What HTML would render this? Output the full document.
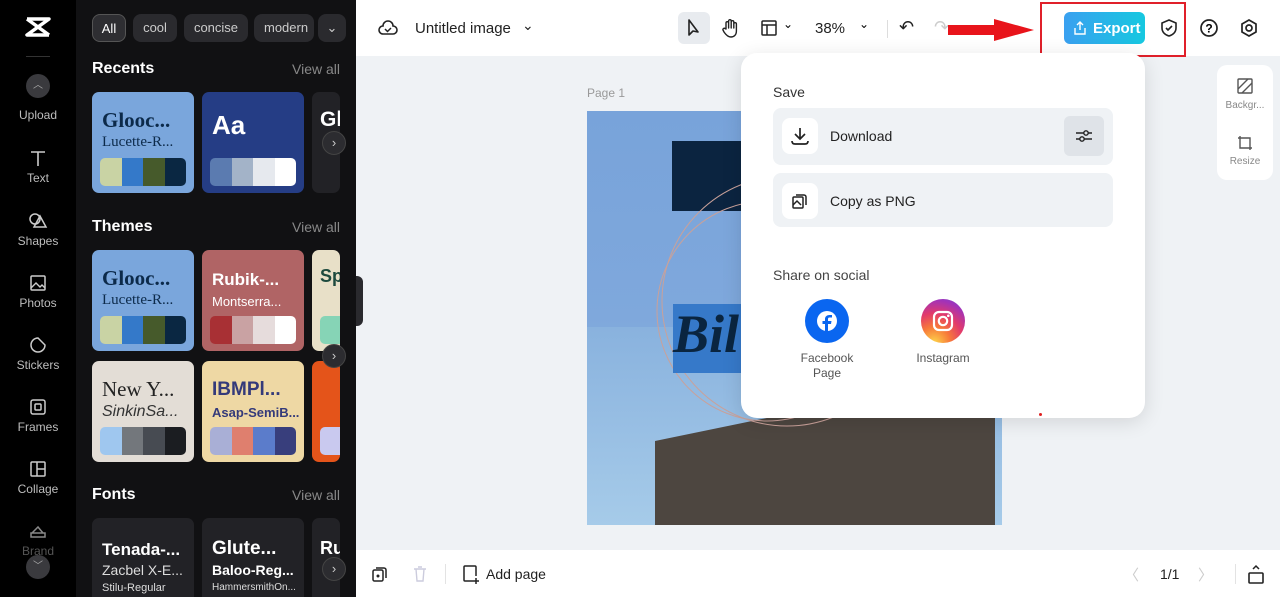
<!DOCTYPE html>
<html><head><meta charset="utf-8"><style>
*{box-sizing:border-box;margin:0;padding:0}
body{width:1280px;height:597px;overflow:hidden;font-family:"Liberation Sans",sans-serif;background:#eff2f5;position:relative}
.abs{position:absolute}
#side{left:0;top:0;width:76px;height:597px;background:#000}
.si{position:absolute;left:0;width:76px;text-align:center;color:#bdbdbd;font-size:12px}
.si svg{display:block;margin:0 auto 3px}
#panel{left:76px;top:0;width:280px;height:597px;background:#111113;overflow:hidden}
.chip{position:absolute;top:14px;height:28px;border-radius:8px;background:#2a2a2e;color:#ccc;font-size:13px;line-height:28px;text-align:center}
.h{position:absolute;left:16px;color:#fff;font-weight:bold;font-size:16px}
.va{position:absolute;right:16px;color:#888;font-size:14px}
.card{position:absolute;width:102px;height:101px;border-radius:7px;overflow:hidden}
.card .t1{position:absolute;left:10px;top:16px;font-size:21px;font-weight:bold;white-space:nowrap}
.card .t2{position:absolute;left:10px;top:42px;font-size:15px;white-space:nowrap}
.pal{position:absolute;left:8px;top:66px;width:86px;height:28px;border-radius:5px;overflow:hidden;display:flex}
.pal i{flex:1}
.arr{position:absolute;width:24px;height:24px;border-radius:50%;background:#2c2c30;border:1px solid #444;color:#ccc;font-size:13px;line-height:22px;text-align:center}
#top{left:356px;top:0;width:924px;height:56px;background:#fff}
#bot{left:356px;top:550px;width:924px;height:47px;background:#fff}
#pop{left:741px;top:53px;width:404px;height:365px;background:#fff;border-radius:16px;box-shadow:0 4px 20px rgba(0,0,0,.12)}
.row{position:absolute;left:32px;width:340px;height:57px;background:#eff2f5;border-radius:8px}
.row .ic{position:absolute;left:9px;top:10px;width:36px;height:36px;background:#fff;border-radius:8px}
.row span{position:absolute;left:57px;top:20px;font-size:14px;color:#222}
</style></head><body>
<div id="side" class="abs">
  <svg class="abs" style="left:24px;top:16px" width="28" height="22" viewBox="0 0 28 22"><path d="M3 3h22L3 19h22" fill="none" stroke="#fff" stroke-width="3.5" stroke-linejoin="round"/><path d="M3 3L25 19" stroke="#fff" stroke-width="3.5"/></svg>
  <div class="abs" style="left:26px;top:56px;width:24px;height:1px;background:#333"></div>
  <div class="abs" style="left:26px;top:74px;width:24px;height:24px;border-radius:50%;background:#3a3a3e;color:#aaa;font-size:10px;text-align:center;line-height:24px">︿</div>
  <div class="si" style="top:108px">Upload</div>
  <div class="si" style="top:148px"><svg width="20" height="20" viewBox="0 0 20 20"><path d="M3 4h14M10 4v14" stroke="#ccc" stroke-width="1.6" fill="none"/></svg>Text</div>
  <div class="si" style="top:211px"><svg width="20" height="20" viewBox="0 0 20 20"><circle cx="7" cy="8" r="5" stroke="#ccc" stroke-width="1.5" fill="none"/><path d="M12 5l6 11H6z" stroke="#ccc" stroke-width="1.5" fill="none"/></svg>Shapes</div>
  <div class="si" style="top:273px"><svg width="20" height="20" viewBox="0 0 20 20"><rect x="3" y="3" width="14" height="14" rx="1" stroke="#ccc" stroke-width="1.5" fill="none"/><path d="M3 15l5-5 4 4 2-2 3 3" stroke="#ccc" stroke-width="1.4" fill="none"/></svg>Photos</div>
  <div class="si" style="top:335px"><svg width="20" height="20" viewBox="0 0 20 20"><path d="M17 10a7 7 0 1 1-7-7l7 7z" stroke="#ccc" stroke-width="1.5" fill="none"/></svg>Stickers</div>
  <div class="si" style="top:397px"><svg width="20" height="20" viewBox="0 0 20 20"><rect x="3" y="3" width="14" height="14" rx="2" stroke="#ccc" stroke-width="1.5" fill="none"/><rect x="7" y="7" width="6" height="6" rx="1" stroke="#ccc" stroke-width="1.5" fill="none"/></svg>Frames</div>
  <div class="si" style="top:459px"><svg width="20" height="20" viewBox="0 0 20 20"><rect x="3" y="3" width="14" height="14" rx="1" stroke="#ccc" stroke-width="1.5" fill="none"/><path d="M9 3v14M9 10h8" stroke="#ccc" stroke-width="1.5"/></svg>Collage</div>
  <div class="si" style="top:521px;color:#555"><svg width="20" height="20" viewBox="0 0 20 20"><path d="M3 12h14v4H3zM4 12l6-6 5 6" stroke="#888" stroke-width="1.5" fill="none"/></svg>Brand</div>
  <div class="abs" style="left:26px;top:555px;width:24px;height:24px;border-radius:50%;background:#3a3a3e;color:#aaa;font-size:10px;text-align:center;line-height:24px">﹀</div>
</div>
<div id="panel" class="abs">
  <div class="chip" style="left:16px;width:34px;background:#2e2e32;border:1px solid #555;color:#fff">All</div>
  <div class="chip" style="left:57px;width:44px">cool</div>
  <div class="chip" style="left:108px;width:64px">concise</div>
  <div class="chip" style="left:178px;width:60px;text-align:left;padding-left:10px;overflow:hidden;white-space:nowrap">modern</div>
  <div class="chip" style="left:242px;width:28px">⌄</div>
  <div class="h" style="top:60px">Recents</div><div class="va" style="top:61px">View all</div>
  <div class="card" style="left:16px;top:92px;background:#7aa6dc"><div class="t1" style="color:#0c2a4a;font-family:'Liberation Serif',serif">Glooc...</div><div class="t2" style="color:#0c2a4a;font-family:'Liberation Serif',serif">Lucette-R...</div><div class="pal"><i style="background:#c9d3a4"></i><i style="background:#3479c9"></i><i style="background:#465a2b"></i><i style="background:#0a2742"></i></div></div>
  <div class="card" style="left:126px;top:92px;background:#253d85"><div class="t1" style="color:#fff;font-size:26px;top:18px">Aa</div><div class="pal"><i style="background:#5b7bb0"></i><i style="background:#a3b3c8"></i><i style="background:#e6e9ee"></i><i style="background:#fff"></i></div></div>
  <div class="card" style="left:236px;top:92px;width:28px;background:#222226"><div class="t1" style="color:#fff;left:8px">Gl</div></div>
  <div class="arr" style="left:246px;top:131px">›</div>
  <div class="h" style="top:218px">Themes</div><div class="va" style="top:219px">View all</div>
  <div class="card" style="left:16px;top:250px;background:#7aa6dc"><div class="t1" style="color:#0c2a4a;font-family:'Liberation Serif',serif">Glooc...</div><div class="t2" style="color:#0c2a4a;font-family:'Liberation Serif',serif">Lucette-R...</div><div class="pal"><i style="background:#c9d3a4"></i><i style="background:#3479c9"></i><i style="background:#465a2b"></i><i style="background:#0a2742"></i></div></div>
  <div class="card" style="left:126px;top:250px;background:#b06465"><div class="t1" style="color:#fff;font-size:17px;top:20px">Rubik-...</div><div class="t2" style="color:#fff;font-size:13px;top:44px">Montserra...</div><div class="pal"><i style="background:#a83034"></i><i style="background:#c9a2a3"></i><i style="background:#e6dcdc"></i><i style="background:#fff"></i></div></div>
  <div class="card" style="left:236px;top:250px;width:28px;background:#e8e0c8"><div class="t1" style="color:#1d4a3e;left:8px;font-size:18px">Sp</div><div class="pal" style="background:#86d4b6"></div></div>
  <div class="card" style="left:16px;top:361px;background:#e3ddd6"><div class="t1" style="color:#222;font-family:'Liberation Serif',serif;font-weight:normal">New Y...</div><div class="t2" style="color:#333;font-style:italic;font-size:16px">SinkinSa...</div><div class="pal"><i style="background:#9fc7ef"></i><i style="background:#73777c"></i><i style="background:#474b52"></i><i style="background:#1b1d21"></i></div></div>
  <div class="card" style="left:126px;top:361px;background:#eed8a4"><div class="t1" style="color:#343a7a;font-size:19px;top:18px">IBMPl...</div><div class="t2" style="color:#343a7a;font-size:13px;font-weight:bold;top:44px">Asap-SemiB...</div><div class="pal"><i style="background:#a9afd6"></i><i style="background:#df7f6e"></i><i style="background:#5b7ccb"></i><i style="background:#383e7c"></i></div></div>
  <div class="card" style="left:236px;top:361px;width:28px;background:#e4541a"><div class="pal" style="background:#c9c9ef"></div></div>
  <div class="arr" style="left:246px;top:344px">›</div>
  <div class="h" style="top:486px">Fonts</div><div class="va" style="top:487px">View all</div>
  <div class="card" style="left:16px;top:518px;background:#222226"><div class="t1" style="color:#fff;top:22px;font-size:17px">Tenada-...</div><div class="t2" style="color:#ddd;top:44px;font-size:14px">Zacbel X-E...</div><div class="t2" style="color:#ddd;top:64px;font-size:11px">Stilu-Regular</div></div>
  <div class="card" style="left:126px;top:518px;background:#222226"><div class="t1" style="color:#fff;top:20px;font-size:19px">Glute...</div><div class="t2" style="color:#fff;top:44px;font-size:14px;font-weight:bold">Baloo-Reg...</div><div class="t2" style="color:#ddd;top:64px;font-size:10px">HammersmithOn...</div></div>
  <div class="card" style="left:236px;top:518px;width:28px;background:#222226"><div class="t1" style="color:#fff;left:8px;top:20px;font-size:18px">Ru</div></div>
  <div class="arr" style="left:246px;top:557px">›</div>
</div>
<div class="abs" style="left:356px;top:276px;width:7px;height:50px;background:#2a2a2e;border-radius:0 6px 6px 0"></div>
<div id="top" class="abs">
  <svg class="abs" style="left:22px;top:19px" width="20" height="18" viewBox="0 0 20 18"><path d="M5 15a4 4 0 0 1 0-8 5 5 0 0 1 10 0 4 4 0 0 1 0 8z" stroke="#222" stroke-width="1.6" fill="none"/><path d="M7 10l2.5 2.5L13 9" stroke="#222" stroke-width="1.5" fill="none"/></svg>
  <div class="abs" style="left:59px;top:20px;font-size:15px;color:#222">Untitled image</div>
  <div class="abs" style="left:166px;top:17px;font-size:14px;color:#222">⌄</div>
  <div class="abs" style="left:322px;top:12px;width:32px;height:32px;background:#e8ebef;border-radius:6px"></div>
  <svg class="abs" style="left:330px;top:18px" width="16" height="20" viewBox="0 0 16 20"><path d="M3 2v15l4-4 5 1z" stroke="#222" stroke-width="1.6" fill="none" stroke-linejoin="round"/></svg>
  <svg class="abs" style="left:366px;top:18px" width="18" height="20" viewBox="0 0 18 20"><path d="M4 11V5a1.3 1.3 0 0 1 2.6 0v5V3a1.3 1.3 0 0 1 2.6 0v7V4a1.3 1.3 0 0 1 2.6 0v6V6a1.3 1.3 0 0 1 2.6 0v7c0 4-2.5 6-5.5 6S4 17 2 14l-1-2a1.3 1.3 0 0 1 2.2-1.3z" stroke="#222" stroke-width="1.4" fill="none" stroke-linejoin="round"/></svg>
  <svg class="abs" style="left:405px;top:20px" width="16" height="16" viewBox="0 0 16 16"><rect x="1" y="1" width="14" height="14" rx="1" stroke="#222" stroke-width="1.5" fill="none"/><path d="M1 5h14M6 5v10" stroke="#222" stroke-width="1.5"/></svg>
  <div class="abs" style="left:427px;top:17px;font-size:12px">⌄</div>
  <div class="abs" style="left:459px;top:20px;font-size:15px;color:#222">38%</div>
  <div class="abs" style="left:503px;top:17px;font-size:12px">⌄</div>
  <div class="abs" style="left:531px;top:20px;width:1px;height:18px;background:#ddd"></div>
  <div class="abs" style="left:543px;top:17px;font-size:18px;color:#222">↶</div>
  <div class="abs" style="left:578px;top:17px;font-size:18px;color:#ccc">↷</div>
  <svg class="abs" style="left:590px;top:18px" width="90" height="24" viewBox="0 0 90 24"><path d="M2 7h46V1l40 11-40 11v-6H2z" fill="#e8141b"/></svg>
  <div class="abs" style="left:684px;top:2px;width:146px;height:55px;border:2px solid #e0202a"></div>
  <div class="abs" style="left:708px;top:12px;width:81px;height:32px;border-radius:6px;background:linear-gradient(90deg,#3aa0f0,#16c8e0);color:#fff;font-size:15px;font-weight:bold;line-height:33px;padding-left:29px">Export</div>
  <svg class="abs" style="left:717px;top:20px" width="14" height="16" viewBox="0 0 14 16"><path d="M7 10V2M4 5l3-3 3 3M2 8v6h10V8" stroke="#fff" stroke-width="1.4" fill="none"/></svg>
  <svg class="abs" style="left:804px;top:18px" width="18" height="20" viewBox="0 0 18 20"><path d="M9 2l7 3v5c0 4-3 7-7 8-4-1-7-4-7-8V5z" stroke="#222" stroke-width="1.6" fill="none"/><path d="M6 10l2 2 4-4" stroke="#222" stroke-width="1.6" fill="none"/></svg>
  <svg class="abs" style="left:843px;top:18px" width="20" height="20" viewBox="0 0 20 20"><circle cx="10" cy="10" r="8" stroke="#222" stroke-width="1.7" fill="none"/><text x="10" y="14.5" font-size="12" font-weight="bold" text-anchor="middle" font-family="Liberation Sans">?</text></svg>
  <svg class="abs" style="left:883px;top:18px" width="20" height="20" viewBox="0 0 20 20"><path d="M10 2l7 4v8l-7 4-7-4V6z" stroke="#222" stroke-width="1.7" fill="none"/><circle cx="10" cy="10" r="3" stroke="#222" stroke-width="1.7" fill="none"/></svg>
</div>
<div class="abs" style="left:587px;top:86px;font-size:12px;color:#999">Page 1</div>
<div class="abs" style="left:587px;top:111px;width:415px;height:414px;overflow:hidden;background:linear-gradient(180deg,#78a3da 0%,#7fa8dc 50%,#9cc3e6 100%)">
  <div class="abs" style="left:0;top:216px;width:415px;height:198px;background:linear-gradient(180deg,#89b2de,#a6cbe9)"></div>
  <div class="abs" style="left:85px;top:30px;width:80px;height:70px;background:#0b2440"></div>
  <svg class="abs" style="left:0;top:0" width="415" height="414"><path d="M68 330l340-70 0 154H68z" fill="#4d4640"/><circle cx="180" cy="200" r="110" stroke="#c9a19a" fill="none" stroke-width="1"/><circle cx="200" cy="190" r="125" stroke="#c9a19a" fill="none" stroke-width="1"/></svg>
  <div class="abs" style="left:86px;top:193px;width:80px;height:69px;background:#3679c9"></div>
  <div class="abs" style="left:86px;top:192px;font-family:'Liberation Serif',serif;font-style:italic;font-weight:bold;font-size:54px;color:#0a2540">Bil</div>
</div>
<div id="pop" class="abs">
  <div class="abs" style="left:32px;top:31px;font-size:14px;color:#333">Save</div>
  <div class="row" style="top:55px"><div class="ic"><svg style="margin:8px" width="20" height="20" viewBox="0 0 20 20"><path d="M10 2v11M5 8l5 5 5-5M2 15q0 3 3 3h10q3 0 3-3" stroke="#222" stroke-width="1.7" fill="none"/></svg></div><span>Download</span>
    <div class="abs" style="left:291px;top:8px;width:40px;height:40px;border-radius:6px;background:#dfe3e8"><svg style="margin:11px" width="18" height="18" viewBox="0 0 18 18"><path d="M1 6h16M1 12h16" stroke="#222" stroke-width="1.4"/><circle cx="11" cy="6" r="2.2" fill="#dfe3e8" stroke="#222" stroke-width="1.4"/><circle cx="7" cy="12" r="2.2" fill="#dfe3e8" stroke="#222" stroke-width="1.4"/></svg></div></div>
  <div class="row" style="top:120px;height:54px"><div class="ic"><svg style="margin:9px" width="18" height="18" viewBox="0 0 18 18"><rect x="2" y="5" width="10" height="11" rx="1" stroke="#222" stroke-width="1.5" fill="none"/><path d="M5 3h8a2 2 0 0 1 2 2v8M2 13l4-4 4 4" stroke="#222" stroke-width="1.5" fill="none"/></svg></div><span>Copy as PNG</span></div>
  <div class="abs" style="left:32px;top:214px;font-size:14px;color:#444">Share on social</div>
  <div class="abs" style="left:64px;top:246px;width:44px;height:44px;border-radius:50%;background:#0a66f0"><svg style="margin:11px" width="22" height="22" viewBox="0 0 22 22"><circle cx="11" cy="11" r="10" fill="#fff"/><path d="M12 22v-8h3l.5-3H12V9c0-1 .5-1.5 1.5-1.5H16V5h-2.5C11 5 9 6.5 9 9v2H6.5v3H9v8z" fill="#0a66f0"/></svg></div>
  <div class="abs" style="left:50px;top:298px;width:72px;text-align:center;font-size:12px;color:#555;line-height:15px">Facebook Page</div>
  <div class="abs" style="left:180px;top:246px;width:44px;height:44px;border-radius:50%;background:radial-gradient(circle at 30% 100%,#fdd54a 0%,#f7793a 30%,#e23a6b 55%,#a232b8 80%,#6a4cd8 100%)"><svg style="margin:10px" width="24" height="24" viewBox="0 0 24 24"><rect x="3" y="3" width="18" height="18" rx="5" stroke="#fff" stroke-width="2.2" fill="none"/><circle cx="12" cy="12" r="4.2" stroke="#fff" stroke-width="2.2" fill="none"/><circle cx="17.3" cy="6.8" r="1.3" fill="#fff"/></svg></div>
  <div class="abs" style="left:166px;top:298px;width:72px;text-align:center;font-size:12px;color:#555">Instagram</div>
  <div class="abs" style="left:298px;top:360px;width:3px;height:3px;border-radius:50%;background:#e02020"></div>
</div>
<div class="abs" style="left:1217px;top:65px;width:56px;height:115px;background:#fff;border-radius:10px">
  <svg class="abs" style="left:20px;top:13px" width="16" height="16" viewBox="0 0 16 16"><rect x="1" y="1" width="14" height="14" rx="1" stroke="#555" stroke-width="1.4" fill="none"/><path d="M1 11L11 1M5 15L15 5" stroke="#555" stroke-width="1.4"/></svg>
  <div class="abs" style="left:0;top:35px;width:56px;text-align:center;font-size:10px;color:#888">Backgr...</div>
  <svg class="abs" style="left:20px;top:70px" width="16" height="16" viewBox="0 0 16 16"><path d="M3 1v12h12M1 3h12v12" stroke="#555" stroke-width="1.4" fill="none"/></svg>
  <div class="abs" style="left:0;top:91px;width:56px;text-align:center;font-size:10px;color:#888">Resize</div>
</div>
<div id="bot" class="abs">
  <svg class="abs" style="left:16px;top:16px" width="16" height="16" viewBox="0 0 16 16"><rect x="1" y="4" width="10" height="11" rx="1.5" stroke="#222" stroke-width="1.5" fill="none"/><path d="M4 2h8a2 2 0 0 1 2 2v8" stroke="#222" stroke-width="1.5" fill="none"/><circle cx="6" cy="10" r="1.5" fill="#222"/></svg>
  <svg class="abs" style="left:57px;top:16px" width="14" height="16" viewBox="0 0 14 16"><path d="M1 3h12M5 1h4M3 3l1 12h6l1-12" stroke="#ccd" stroke-width="1.4" fill="none"/></svg>
  <div class="abs" style="left:89px;top:14px;width:1px;height:20px;background:#e3e3e3"></div>
  <svg class="abs" style="left:106px;top:15px" width="18" height="20" viewBox="0 0 18 20"><path d="M11 16H3a1 1 0 0 1-1-1V2a1 1 0 0 1 1-1h10a1 1 0 0 1 1 1v9M14 13v6M11 16h6" stroke="#222" stroke-width="1.5" fill="none"/></svg>
  <div class="abs" style="left:130px;top:16px;font-size:14px;color:#222">Add page</div>
  <div class="abs" style="left:768px;top:14px;font-size:15px;color:#ccc">〈</div>
  <div class="abs" style="left:804px;top:16px;font-size:14px;color:#222">1/1</div>
  <div class="abs" style="left:842px;top:14px;font-size:15px;color:#ccc">〉</div>
  <div class="abs" style="left:879px;top:14px;width:1px;height:20px;background:#e3e3e3"></div>
  <svg class="abs" style="left:892px;top:14px" width="16" height="20" viewBox="0 0 16 20"><rect x="1" y="9" width="14" height="10" rx="1" stroke="#222" stroke-width="1.6" fill="none"/><path d="M5 5l3-3 3 3" stroke="#222" stroke-width="1.5" fill="none"/></svg>
</div>
</body></html>
